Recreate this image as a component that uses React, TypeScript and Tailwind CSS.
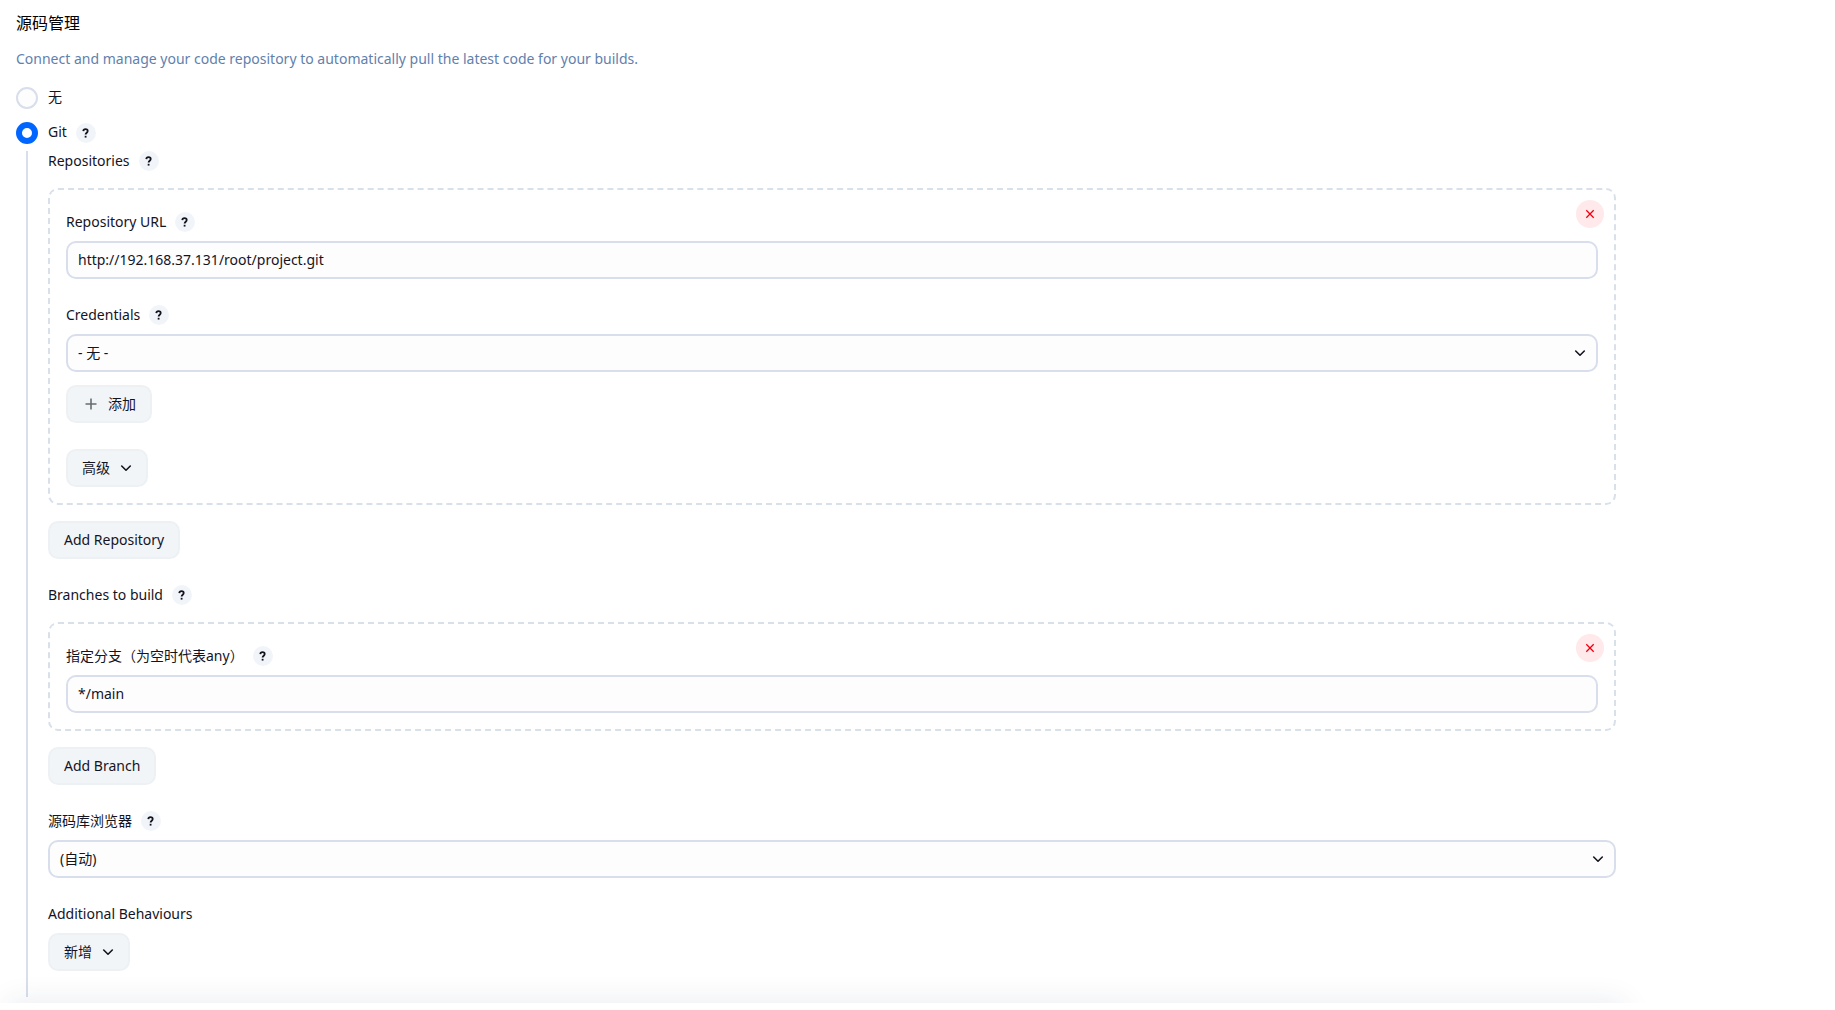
import type { ReactNode } from "react";
import { clsx } from "clsx";

type LabelProps = {
  children: ReactNode;
  htmlFor?: string;
  help?: boolean;
};

function HelpButton() {
  return (
    <button
      type="button"
      aria-label="Help"
      className="flex size-5 shrink-0 items-center justify-center rounded-full bg-[#f1f5f9] text-[#14141f]"
    >
      <svg viewBox="0 0 20 20" className="size-5" fill="none" stroke="currentColor" strokeWidth="1.8">
        <path d="M7.3 8.1C7.4 6.8 8.2 6.2 9.5 6.2s2.2.7 2.2 1.9c0 1.6-2.1 1.7-2.1 3.5" />
        <path d="M9.6 12.8v1.8" />
      </svg>
    </button>
  );
}

function FieldLabel({ children, htmlFor, help = true }: LabelProps) {
  return (
    <div className="mb-[9px] flex h-5 items-center gap-[9px]">
      <label htmlFor={htmlFor} className="leading-5">
        {children}
      </label>
      {help && <HelpButton />}
    </div>
  );
}

function Chevron({ className }: { className?: string }) {
  return (
    <svg viewBox="0 0 12 12" className={clsx("size-3", className)} fill="none" stroke="currentColor" strokeWidth="1.6" strokeLinecap="round" strokeLinejoin="round">
      <path d="M1.7 4l4.3 4.2L10.3 4" />
    </svg>
  );
}

function TextField({ id, value }: { id: string; value: string }) {
  return (
    <input
      id={id}
      type="text"
      defaultValue={value}
      className="block h-[38px] w-full rounded-[10px] border-2 border-[#d8deeb] bg-[#fdfdfe] px-2.5 pb-0.5 outline-none"
    />
  );
}

function SelectField({ id, option }: { id: string; option: string }) {
  return (
    <div className="relative">
      <select
        id={id}
        className="block h-[38px] w-full appearance-none rounded-[10px] border-2 border-[#d8deeb] bg-[#fdfdfe] px-2.5 pb-0.5 outline-none"
      >
        <option>{option}</option>
      </select>
      <Chevron className="pointer-events-none absolute top-[13px] right-3" />
    </div>
  );
}

type ButtonProps = {
  children: ReactNode;
  icon?: ReactNode;
  menu?: boolean;
};

function Button({ children, icon, menu = false }: ButtonProps) {
  return (
    <button
      type="button"
      className="flex h-[38px] w-fit items-center gap-2.5 rounded-[10px] border-2 border-[#eef1f4] bg-[#f2f5f8] px-3.5 leading-5"
    >
      {icon}
      {children}
      {menu && <Chevron />}
    </button>
  );
}

function PlusIcon() {
  return (
    <svg viewBox="0 0 16 16" className="size-4 text-[#6b6b73]" fill="none" stroke="currentColor" strokeWidth="1.6">
      <path d="M9 2.5v11M3.5 8h11" />
    </svg>
  );
}

function RepeatableBox({ children }: { children: ReactNode }) {
  return (
    <div className="relative mt-[17px] mb-4 rounded-[10px] border-2 border-dashed border-[#d8e0ea] px-4 pt-[22px] pb-4">
      <button
        type="button"
        aria-label="Delete"
        className="absolute top-2.5 right-2.5 flex size-7 items-center justify-center rounded-full bg-[#ffe9ea] text-[#f0000f]"
      >
        <svg viewBox="0 0 10 10" className="size-2.5" fill="none" stroke="currentColor" strokeWidth="1.3">
          <path d="M1.3 1.3l7.4 7.4M8.7 1.3L1.3 8.7" />
        </svg>
      </button>
      {children}
    </div>
  );
}

function Radio({ id, checked }: { id: string; checked?: boolean }) {
  return (
    <input
      id={id}
      type="radio"
      name="scm"
      defaultChecked={checked}
      className="size-[22px] shrink-0 appearance-none rounded-full border-2 border-[#d8deeb] bg-[#fdfdfe] checked:border-[6px] checked:border-[#0066ff] checked:bg-white"
    />
  );
}

export default function App() {
  return (
    <div className="relative overflow-hidden bg-white pb-1.5 font-['Noto_Sans','Noto_Sans_CJK_SC',sans-serif] text-[14px] text-[#14141f]">
      <form className="max-w-[1632px] px-4 pt-[11px]">
        <h2 className="text-[16px] leading-6 font-normal text-black">源码管理</h2>
        <p className="mt-3.5 leading-5 text-[#5f81ad]">
          Connect and manage your code repository to automatically pull the latest code for your builds.
        </p>

        <div className="mt-[18px] flex h-[22px] items-center">
          <Radio id="scm-none" />
          <label htmlFor="scm-none" className="ml-2.5 pb-0.5 leading-5">无</label>
        </div>
        <div className="mt-[13px] flex h-[22px] items-center">
          <Radio id="scm-git" checked />
          <label htmlFor="scm-git" className="mr-[9px] ml-2.5 pb-0.5 leading-5">Git</label>
          <HelpButton />
        </div>

        <div className="mt-[7px] ml-2.5 border-l-2 border-[#d8deeb] pb-[26px] pl-5">
          <FieldLabel>Repositories</FieldLabel>
          <RepeatableBox>
            <FieldLabel htmlFor="repo-url">Repository URL</FieldLabel>
            <TextField id="repo-url" value="http://192.168.37.131/root/project.git" />
            <div className="mt-[26px]">
              <FieldLabel htmlFor="credentials">Credentials</FieldLabel>
              <SelectField id="credentials" option="- 无 -" />
            </div>
            <div className="mt-[13px] mb-[26px]">
              <Button icon={<PlusIcon />}>添加</Button>
            </div>
            <Button menu>高级</Button>
          </RepeatableBox>
          <Button>Add Repository</Button>

          <div className="mt-[26px]">
            <FieldLabel>Branches to build</FieldLabel>
            <RepeatableBox>
              <FieldLabel htmlFor="branch">指定分支（为空时代表any）</FieldLabel>
              <TextField id="branch" value="*/main" />
            </RepeatableBox>
            <Button>Add Branch</Button>
          </div>

          <div className="mt-[26px]">
            <FieldLabel htmlFor="browser">源码库浏览器</FieldLabel>
            <SelectField id="browser" option="(自动)" />
          </div>

          <div className="mt-[26px]">
            <FieldLabel help={false}>Additional Behaviours</FieldLabel>
            <Button menu>新增</Button>
          </div>
        </div>
      </form>

      <div className="pointer-events-none absolute inset-x-0 bottom-0 h-8 overflow-hidden">
        <div className="mx-2 mt-8 h-10 max-w-[1616px] shadow-[0_0_30px_rgba(30,50,100,0.1)]" />
      </div>
    </div>
  );
}
